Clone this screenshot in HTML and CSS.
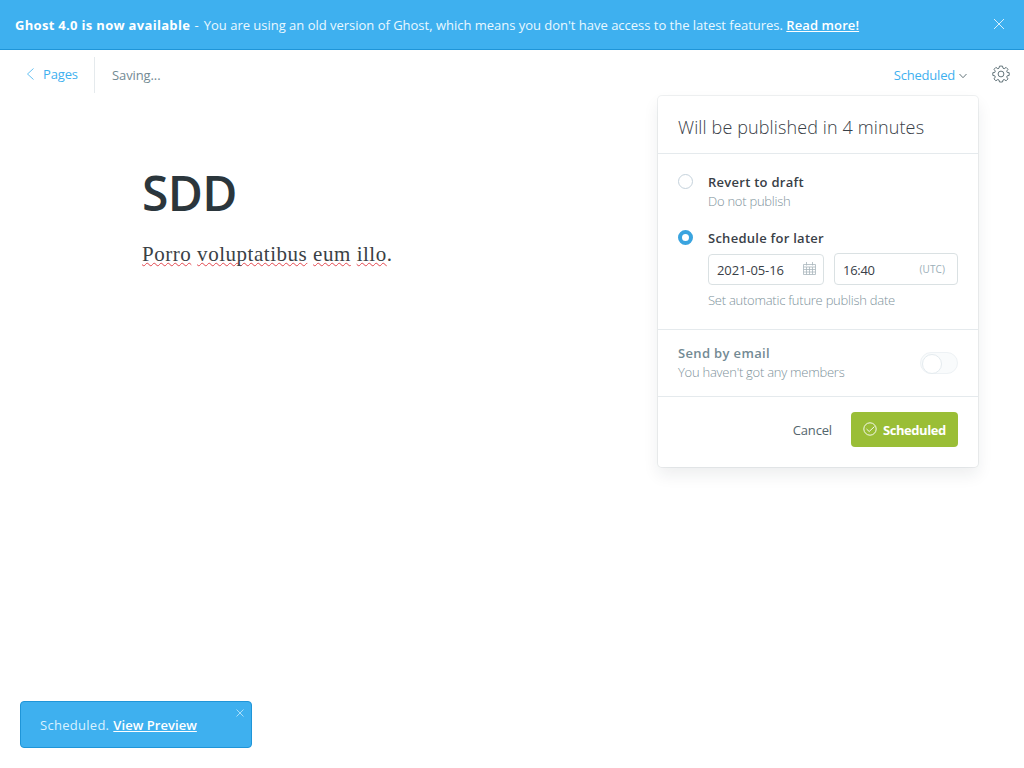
FILE: index.html
```html
<!DOCTYPE html>
<html lang="en">
<head>
<meta charset="utf-8">
<title>Ghost editor</title>
<link rel="stylesheet" href="styles.css">
</head>
<body>
<aside class="banner">
  <p class="banner-text"><b class="t-brand">Ghost 4.0 is now available</b><span class="t-dash"> - </span><span class="t-info">You are using an old version of Ghost, which means you don't have access to the latest features. </span><a class="t-more">Read more!</a></p>
  <svg class="banner-close" viewBox="0 0 12 12"><path d="M1 1l10 10M11 1L1 11"/></svg>
</aside>
<header class="bar">
  <a class="back"><svg class="back-icon" viewBox="0 0 8 12"><path d="M7 .5L1 6l6 5.500"/></svg><span class="t-pages">Pages</span></a>
  <span class="status t-saving">Saving...</span>
  <a class="publish"><span class="t-trigger">Scheduled</span><svg class="chevron" viewBox="0 0 8 6"><path d="M.5 1L4 4.700 7.500 1"/></svg></a>
  <svg class="gear" viewBox="-9 -9 18 18"><path d="M-1.500-7.900h3L2-5.800l1.200.5L5.100-6.600 7-4.700 5.700-2.900l.5 1.300 2 .3v2.700l-2 .4-.5 1.200L7 4.900 5.100 6.800 3.200 5.500 2 6l-.5 2h-3L-2 6l-1.200-.5-1.900 1.300L-7 4.900-5.700 3l-.5-1.200-2-.4v-2.700l2-.3.5-1.300L-7-4.700l1.900-1.900 1.900 1.300L-2-5.800z"/><circle r="2.900"/></svg>
</header>
<main class="editor">
  <h1 class="title">SDD</h1>
  <p class="body-text"><u>Porro</u> <u>voluptatibus</u> <u>eum</u> <u>illo</u>.</p>
</main>
<section class="menu">
  <h2 class="menu-title"><span class="t-menu">Will be published in 4 minutes</span></h2>
  <div class="options">
    <div class="option">
      <i class="radio"></i>
      <div><div class="label"><span class="t-revert">Revert to draft</span></div><div class="hint"><span class="t-dont">Do not publish</span></div></div>
    </div>
    <div class="option option-later">
      <i class="radio radio-on"></i>
      <div><div class="label"><span class="t-later">Schedule for later</span></div>
        <div class="fields">
          <div class="field date"><span class="t-date">2021-05-16</span><svg class="calendar" viewBox="0 0 13 13"><path d="M.5 2.500h12v10H.5zM.5 5h12M.5 7.500h12M.5 10h12M3.500 5v7.500M6.500 5v7.500M9.500 5v7.500M3.500 0v3.500M9.500 0v3.500"/></svg></div>
          <div class="field time"><span class="t-time">16:40</span><small class="t-utc">(UTC)</small></div>
        </div>
        <div class="hint"><span class="t-set">Set automatic future publish date</span></div>
      </div>
    </div>
  </div>
  <div class="email">
    <div><div class="label muted"><span class="t-email">Send by email</span></div><div class="hint"><span class="t-members">You haven't got any members</span></div></div>
    <i class="switch"></i>
  </div>
  <footer class="actions">
    <span class="cancel t-cancel">Cancel</span>
    <button class="button"><svg class="check" viewBox="0 0 14 14"><circle cx="7" cy="7" r="6.200"/><path d="M3.500 7l2.700 2.500L11.500 4.500"/></svg><span class="t-button">Scheduled</span></button>
  </footer>
</section>
<div class="toast">
  <span class="t-toast">Scheduled.</span><a class="t-preview">View Preview</a>
  <svg class="toast-close" viewBox="0 0 8 8"><path d="M.5.5l7 7M7.500.5l-7 7"/></svg>
</div>
</body>
</html>
```
FILE: styles.css
```css
* { box-sizing: border-box; }
body {
  margin: 0;
  height: 768px;
  position: relative;
  overflow: hidden;
  background: #fff;
  color: #394047;
  font: 13px/20px "Open Sans", "Noto Sans", sans-serif;
}
h1, h2, p { margin: 0; font-weight: 400; }
svg { fill: none; stroke: currentColor; flex: none; display: block; }
span, a, b, small { white-space: nowrap; }

.banner {
  height: 50px;
  padding: 0 19px 0 15px;
  display: flex;
  align-items: center;
  justify-content: space-between;
  background: #3eb0ef;
  border-bottom: 1px solid #1f95d8;
  color: #fff;
}
.banner-text { display: flex; white-space: pre; padding-top: 1px; }
.banner-text span { white-space: pre; color: #e9f8ff; }
.banner-text b { font-weight: 700; }
.banner-text a { font-weight: 600; text-decoration: underline; }
.banner-close { width: 12px; height: 12px; margin-top: -1px; stroke-width: .8; }

.bar { height: 50px; display: flex; align-items: center; padding: 0 14px 0 26px; color: #3eb0ef; }
.back { display: flex; align-items: center; gap: 8px; height: 36px; width: 69px; margin-top: -1px; padding-bottom: 1px; border-right: 1px solid #e5eaed; }
.back-icon { width: 9px; height: 12px; stroke-width: .8; }
.status { margin-left: 17px; color: #738a94; }
.publish { margin-left: auto; display: flex; align-items: center; gap: 4px; }
.chevron { width: 8px; height: 6px; margin-top: 1px; stroke-width: .9; color: #54666d; }
.gear { width: 18px; height: 18px; margin-left: 25px; margin-top: -2px; stroke-width: .9; color: #54666d; }

.editor { padding: 60px 142px 0; }
.title { font-size: 48px; line-height: 66px; font-weight: 600; letter-spacing: -.6px; color: #2b363c; }
.body-text { margin-top: 13px; font: 21px/30px "Liberation Serif", serif; letter-spacing: .53px; color: #3a4145; }
.body-text u { text-decoration: underline wavy #e2464e 1px; text-underline-offset: 1px; text-decoration-skip-ink: none; }

.menu {
  position: absolute;
  left: 658px;
  top: 96px;
  width: 320px;
  height: 371px;
  background: #fff;
  border-radius: 4px;
  box-shadow: 0 0 0 1px rgba(99, 114, 130, .1), 0 8px 16px rgba(27, 39, 51, .08);
}
.menu-title { height: 58px; padding: 18px 20px 0; font-size: 18px; font-weight: 300; line-height: 26px; border-bottom: 1px solid #e5eaed; }
.options { height: 176px; padding: 18px 20px 0; border-bottom: 1px solid #e5eaed; }
.option { display: flex; gap: 15px; }
.option-later { margin-top: 18px; }
.radio { width: 15px; height: 15px; margin-top: 2px; flex: none; border: 1px solid #c5d2dc; border-radius: 50%; }
.radio-on { border: 4px solid #3aa4df; }
.label { font-weight: 600; line-height: 20px; }
.hint { font-weight: 300; color: #7e929b; line-height: 18px; }
.muted { color: #738a94; }
.fields { display: flex; gap: 10px; align-items: flex-end; margin: 5px 0 6px; }
.field { display: flex; align-items: center; justify-content: space-between; border: 1px solid #dae1e3; border-radius: 4px; padding: 1px 8px 0; }
.date { width: 116px; height: 31px; padding-right: 7px; }
.time { width: 124px; height: 32px; padding: 2px 12px 0 8px; }
.calendar { width: 13px; height: 13px; margin-top: -3px; color: #a9b6bd; stroke-width: .8; }
.field small { font-size: 10px; color: #9baeb8; margin-top: -3px; }
.email { height: 67px; padding: 13px 20px 0; display: flex; justify-content: space-between; border-bottom: 1px solid #e5eaed; }
.switch { width: 38px; height: 22px; margin-top: 9px; border: 1px solid #eef2f5; border-radius: 11px; background: #f9fbfc; }
.switch::before { content: ""; display: block; width: 18px; height: 18px; margin: 1px 0 0 1px; border: 1px solid #e4ebef; border-radius: 50%; background: #fff; }
.actions { display: flex; justify-content: flex-end; align-items: center; gap: 19px; padding: 15px 20px 0; }
.cancel { color: #54666d; padding-top: 1px; }
.button { width: 107px; height: 35px; padding: 0 12px; display: flex; align-items: center; gap: 6px; border: 0; border-radius: 4px; background: #9abe36; color: #fff; font: 700 13px/20px "Open Sans", sans-serif; }
.button span { padding-top: 1px; }
.check { width: 14px; height: 14px; margin-top: -1px; stroke-width: .9; }

.toast {
  position: absolute;
  left: 20px;
  top: 701px;
  width: 232px;
  height: 47px;
  padding: 1px 7px 0 19px;
  display: flex;
  align-items: center;
  gap: 4px;
  background: #3eb0ef;
  border: 1px solid #1f95d8;
  border-radius: 4px;
  color: #d9f2ff;
}
.toast a { color: #fff; font-weight: 600; text-decoration: underline; }
.toast-close { width: 8px; height: 8px; margin: 6px 0 auto auto; stroke-width: .7; }

/* Tracking per label */
.t-brand { letter-spacing: .31px; }
.t-dash { letter-spacing: .9px; }
.t-info { letter-spacing: -.015px; }
.t-more { letter-spacing: .1px; }
.t-pages { letter-spacing: -.15px; }
.t-saving { letter-spacing: -.1px; }
.t-trigger { letter-spacing: -.2px; }
.t-menu { letter-spacing: .12px; }
.t-revert, .t-later { letter-spacing: .26px; }
.t-dont, .t-set, .t-members { letter-spacing: -.25px; }
.t-email { letter-spacing: .35px; }
.t-date { letter-spacing: -.1px; }
.t-time { letter-spacing: -.3px; }
.t-utc { letter-spacing: .1px; }
.t-cancel { letter-spacing: -.15px; }
.t-button { letter-spacing: -.45px; }
.t-toast { letter-spacing: .28px; }
.t-preview { letter-spacing: .05px; }
```
